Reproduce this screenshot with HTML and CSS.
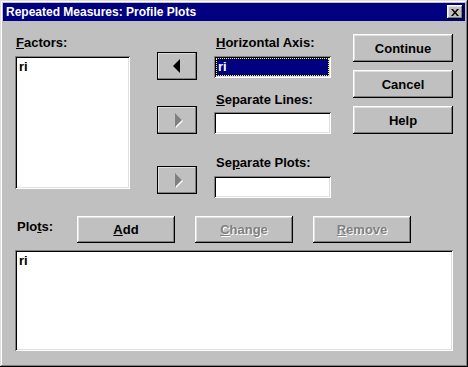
FILE: index.html
```
<html>
<head>
    <link rel="stylesheet" href="styles.css">
    <title>Repeated Measures: Profile Plots</title>
</head>
<body>
    <div class="window">
        <div class="titlebar">
            <span class="title">Repeated Measures: Profile Plots</span>
            <button class="close-btn">
                <svg width="8" height="7" viewBox="0 0 8 7">
                    <path d="M0 0h2l2 2.5 2-2.5h2l-3 3.5 3 3.5h-2l-2-2.5-2 2.5h-2l3-3.5z" fill="#000"/>
                </svg>
            </button>
        </div>
        <div class="client">
            <div class="top-section">
                <div class="factors-col">
                    <div class="label"><u>F</u>actors:</div>
                    <div class="listbox factors-list">
                        <div class="item">ri</div>
                    </div>
                </div>
                <div class="arrows-col">
                    <button class="btn arrow-btn arrow-1">
                        <span class="tri tri-left"></span>
                    </button>
                    <button class="btn arrow-btn arrow-2" disabled>
                        <span class="tri tri-right"></span>
                    </button>
                    <button class="btn arrow-btn arrow-3" disabled>
                        <span class="tri tri-right"></span>
                    </button>
                </div>
                <div class="fields-col">
                    <div class="label"><u>H</u>orizontal Axis:</div>
                    <div class="field field-1">
                        <span class="selected">ri</span>
                    </div>
                    <div class="label label-2"><u>S</u>eparate Lines:</div>
                    <div class="field field-2"></div>
                    <div class="label label-3">Se<u>p</u>arate Plots:</div>
                    <div class="field field-3"></div>
                </div>
                <div class="buttons-col">
                    <button class="btn cmd-btn">Continue</button>
                    <button class="btn cmd-btn">Cancel</button>
                    <button class="btn cmd-btn">Help</button>
                </div>
            </div>
            <div class="plots-row">
                <div class="label plots-label">Plo<u>t</u>s:</div>
                <button class="btn plot-btn"><u>A</u>dd</button>
                <button class="btn plot-btn" disabled><u>C</u>hange</button>
                <button class="btn plot-btn" disabled><u>R</u>emove</button>
            </div>
            <div class="listbox plots-list">
                <div class="item">ri</div>
            </div>
        </div>
    </div>
</body>
</html>
```
FILE: styles.css
```
body {
    margin: 0;
    font-family: "Liberation Sans", Arial, sans-serif;
    font-weight: bold;
    font-size: 13px;
    background: #c0c0c0;
}

u {
    text-decoration: underline;
    text-underline-offset: 1px;
}

.window {
    width: 468px;
    height: 367px;
    box-sizing: border-box;
    padding: 3px;
    background: #c0c0c0;
    box-shadow: inset -1px -1px #000, inset 1px 1px #dfdfdf,
                inset -2px -2px #808080, inset 2px 2px #fff;
}

.titlebar {
    height: 18px;
    background: #000080;
    display: flex;
    align-items: center;
    justify-content: space-between;
    padding: 0 2px 0 3px;
}

.title {
    color: #fff;
    font-size: 12px;
    line-height: 18px;
}

.close-btn {
    width: 16px;
    height: 14px;
    padding: 0;
    border: none;
    background: #c0c0c0;
    display: flex;
    align-items: center;
    justify-content: center;
    box-shadow: inset -1px -1px #000, inset 1px 1px #fff,
                inset -2px -2px #808080, inset 2px 2px #dfdfdf;
}

.client {
    padding: 13px 12px 0 12px;
}

.top-section {
    display: flex;
}

.label {
    line-height: 16px;
    height: 16px;
    color: #000;
}

.factors-col {
    width: 115px;
    margin-top: 1px;
}

.factors-col .label {
    padding-left: 1px;
    margin-bottom: 5px;
}

.listbox {
    background: #fff;
    box-sizing: border-box;
    padding: 3px 4px;
    box-shadow: inset 1px 1px #808080, inset -1px -1px #fff,
                inset 2px 2px #000, inset -2px -2px #dfdfdf;
}

.factors-list {
    height: 133px;
}

.item {
    line-height: 15px;
}

.arrows-col {
    width: 40px;
    margin-left: 27px;
    margin-top: 18px;
    display: flex;
    flex-direction: column;
}

.btn {
    font-family: "Liberation Sans", Arial, sans-serif;
    font-weight: bold;
    font-size: 13px;
    color: #000;
    background: #c0c0c0;
    border: none;
    padding: 0;
    box-shadow: inset -1px -1px #000, inset 1px 1px #fff,
                inset -2px -2px #808080, inset 2px 2px #dfdfdf;
}

.btn:disabled {
    color: #808080;
    text-shadow: 1px 1px #fff;
}

.arrow-btn {
    width: 40px;
    height: 28px;
    display: flex;
    align-items: center;
    justify-content: center;
    outline: 1px solid #000;
    outline-offset: -1px;
}

.arrow-2 {
    margin-top: 26px;
}

.arrow-3 {
    margin-top: 32px;
}

.tri {
    width: 0;
    height: 0;
    border-top: 7px solid transparent;
    border-bottom: 7px solid transparent;
}

.tri-left {
    border-right: 7px solid #000;
    margin-right: 2px;
}

.tri-right {
    border-left: 7px solid #808080;
    margin-left: 2px;
    filter: drop-shadow(1px 1px 0 #fff);
}

.fields-col {
    width: 117px;
    margin-left: 17px;
    margin-top: 1px;
}

.fields-col .label {
    padding-left: 2px;
}

.field {
    height: 22px;
    margin-top: 5px;
    box-sizing: border-box;
    background: #fff;
    padding: 2px;
    box-shadow: inset 1px 1px #808080, inset -1px -1px #fff,
                inset 2px 2px #000, inset -2px -2px #dfdfdf;
}

.label-2 {
    margin-top: 14px;
}

.field-2 {
    margin-top: 4px;
}

.label-3 {
    margin-top: 21px;
}

.selected {
    display: block;
    height: 100%;
    box-sizing: border-box;
    background: #000080;
    color: #fff;
    border: 1px dotted #ffff00;
    padding-left: 1px;
    line-height: 16px;
}

.buttons-col {
    width: 100px;
    margin-left: 22px;
    display: flex;
    flex-direction: column;
    gap: 8px;
}

.cmd-btn {
    height: 28px;
}

.plots-row {
    display: flex;
    align-items: center;
    margin-top: 18px;
    height: 27px;
}

.plots-label {
    width: 62px;
    box-sizing: border-box;
    padding-left: 2px;
    margin-top: -5px;
}

.plot-btn {
    width: 98px;
    height: 27px;
    margin-right: 20px;
}

.plots-list {
    margin-top: 7px;
    width: 438px;
    height: 101px;
}
```
